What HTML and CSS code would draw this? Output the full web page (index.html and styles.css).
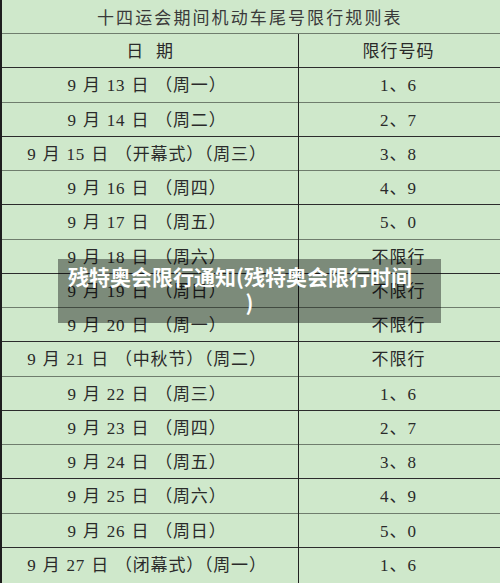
FILE: index.html
```html
<!DOCTYPE html>
<html lang="zh-CN">
<head>
<meta charset="utf-8">
<title>十四运会期间机动车尾号限行规则表</title>
<link rel="stylesheet" href="styles.css">
</head>
<body>
<div class="sheet">
  <div class="title">十四运会期间机动车尾号限行规则表</div>
  <div class="table">
    <div class="row head"><div class="c1">日&nbsp;&nbsp;期</div><div class="c2">限行号码</div></div>
    <div class="row"><div class="c1">9 月 13 日 （周一）</div><div class="c2">1、6</div></div>
    <div class="row"><div class="c1">9 月 14 日 （周二）</div><div class="c2">2、7</div></div>
    <div class="row"><div class="c1">9 月 15 日 （开幕式）（周三）</div><div class="c2">3、8</div></div>
    <div class="row"><div class="c1">9 月 16 日 （周四）</div><div class="c2">4、9</div></div>
    <div class="row"><div class="c1">9 月 17 日 （周五）</div><div class="c2">5、0</div></div>
    <div class="row"><div class="c1">9 月 18 日 （周六）</div><div class="c2">不限行</div></div>
    <div class="row"><div class="c1">9 月 19 日 （周日）</div><div class="c2">不限行</div></div>
    <div class="row"><div class="c1">9 月 20 日 （周一）</div><div class="c2">不限行</div></div>
    <div class="row"><div class="c1">9 月 21 日 （中秋节）（周二）</div><div class="c2">不限行</div></div>
    <div class="row"><div class="c1">9 月 22 日 （周三）</div><div class="c2">1、6</div></div>
    <div class="row"><div class="c1">9 月 23 日 （周四）</div><div class="c2">2、7</div></div>
    <div class="row"><div class="c1">9 月 24 日 （周五）</div><div class="c2">3、8</div></div>
    <div class="row"><div class="c1">9 月 25 日 （周六）</div><div class="c2">4、9</div></div>
    <div class="row"><div class="c1">9 月 26 日 （周日）</div><div class="c2">5、0</div></div>
    <div class="row"><div class="c1">9 月 27 日 （闭幕式）（周一）</div><div class="c2">1、6</div></div>
  </div>
  <div class="overlay"><span class="ol-line">残特奥会限行通知(残特奥会限行时间</span><span class="ol-line ol-end">)</span></div>
</div>
</body>
</html>
```
FILE: styles.css
```css
html, body {
  margin: 0;
  padding: 0;
  width: 500px;
  height: 583px;
  overflow: hidden;
  background: #cfe8cb;
}
.sheet {
  position: relative;
  width: 500px;
  height: 583px;
  box-sizing: border-box;
  border-left: 2px solid #1e1e1e;
  font-family: "Liberation Serif", "Noto Sans CJK SC", serif;
  color: #2a2a2a;
}
.title {
  height: 33px;
  box-sizing: border-box;
  padding-top: 9px;
  padding-left: 95px;
  font-size: 17px;
  line-height: 20px;
  letter-spacing: 2.1px;
  color: #3a3a3a;
}
.row {
  display: grid;
  grid-template-columns: 297px 1fr;
  height: 34.27px;
  box-sizing: border-box;
  border-top: 1px solid #2c2c2c;
  font-size: 17px;
  line-height: 36px;
}
.row:nth-child(odd) {
  border-top-color: #6f7d6d;
}
.c1 {
  border-right: 1px solid #222;
  text-align: center;
  padding-right: 6px;
  letter-spacing: 0.8px;
  word-spacing: 1px;
  white-space: nowrap;
}
.c2 {
  text-align: center;
  padding-right: 2px;
  letter-spacing: 1px;
}
.head .c1 {
  padding-right: 0;
}
.overlay {
  position: absolute;
  left: 56px;
  top: 259px;
  width: 383px;
  height: 64px;
  box-sizing: border-box;
  padding: 4px 10px 0;
  background: rgba(0, 0, 0, 0.4);
  color: #fff;
  font-family: "Noto Sans CJK SC", sans-serif;
  font-weight: 700;
  font-size: 21px;
  line-height: 26px;
}
.ol-line {
  display: block;
  white-space: nowrap;
}
.ol-end {
  text-align: center;
}
```
